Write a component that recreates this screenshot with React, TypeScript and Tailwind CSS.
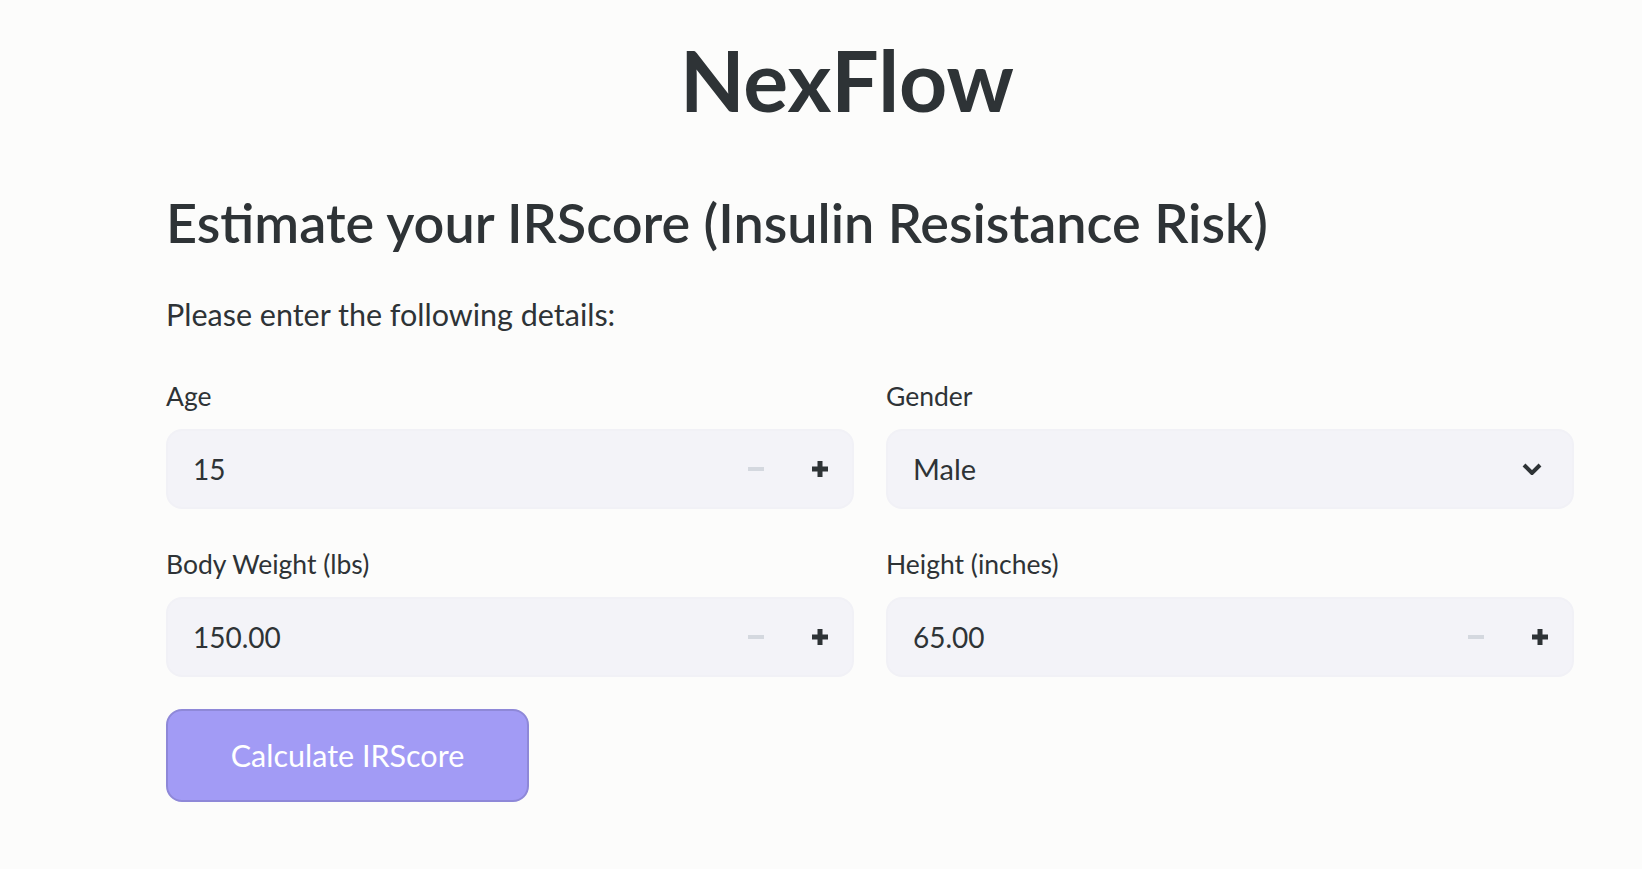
import { useState } from 'react'

function Stepper({ label, value }: { label: string; value: string }) {
  return (
    <div>
      <div className="text-[26.5px] leading-[40px] mb-[13px]">{label}</div>
      <div className="h-[80px] rounded-[16px] bg-[#f3f3f8] border-2 border-[#f1f1f6] flex items-center">
        <div className="flex-1 pl-[25px] text-[28px] leading-[40px]">{value}</div>
        <button className="w-[64px] h-full flex items-center justify-center">
          <svg width="16" height="16" viewBox="0 0 16 16">
            <path d="M0 8h16" stroke="#d4d8df" strokeWidth="4" />
          </svg>
        </button>
        <button className="w-[64px] h-full flex items-center justify-center">
          <svg width="16" height="16" viewBox="0 0 16 16">
            <path d="M0 8h16M8 0v16" stroke="#2e3336" strokeWidth="5" />
          </svg>
        </button>
      </div>
    </div>
  )
}

export default function App() {
  const [gender] = useState('Male')

  return (
    <div className="min-h-screen bg-[#fcfcfb] text-[#2e3336] [font-family:Lato,'Noto_Sans',sans-serif]">
      <div className="pl-[166px] pr-[68px] pt-[30px] pb-10">
        <h1 className="text-center pr-[46px] text-[84px] leading-[100px] font-bold">NexFlow</h1>

        <h3 className="mt-[58px] text-[54px] leading-[70px] font-semibold">
          Estimate your IRScore (Insulin Resistance Risk)
        </h3>

        <p className="mt-[34px] text-[30.5px] leading-[44px]">Please enter the following details:</p>

        <div className="mt-[40px] grid grid-cols-2 gap-x-[32px] gap-y-[35px]">
          <Stepper label="Age" value="15" />

          <div>
            <div className="text-[26.5px] leading-[40px] mb-[13px]">Gender</div>
            <div className="h-[80px] rounded-[16px] bg-[#f3f3f8] border-2 border-[#f1f1f6] flex items-center justify-between pl-[25px] pr-[30px]">
              <span className="text-[29px] leading-[40px]">{gender}</span>
              <svg width="20" height="12" viewBox="0 0 20 12" fill="none">
                <path d="M2 2l8 8 8-8" stroke="#2e3336" strokeWidth="4" />
              </svg>
            </div>
          </div>

          <Stepper label="Body Weight (lbs)" value="150.00" />
          <Stepper label="Height (inches)" value="65.00" />
        </div>

        <button className="mt-[32px] w-[363px] h-[93px] rounded-[16px] bg-[#a29bf5] border-2 border-[#8e88d8] text-white text-[30.5px]">
          Calculate IRScore
        </button>
      </div>
    </div>
  )
}
